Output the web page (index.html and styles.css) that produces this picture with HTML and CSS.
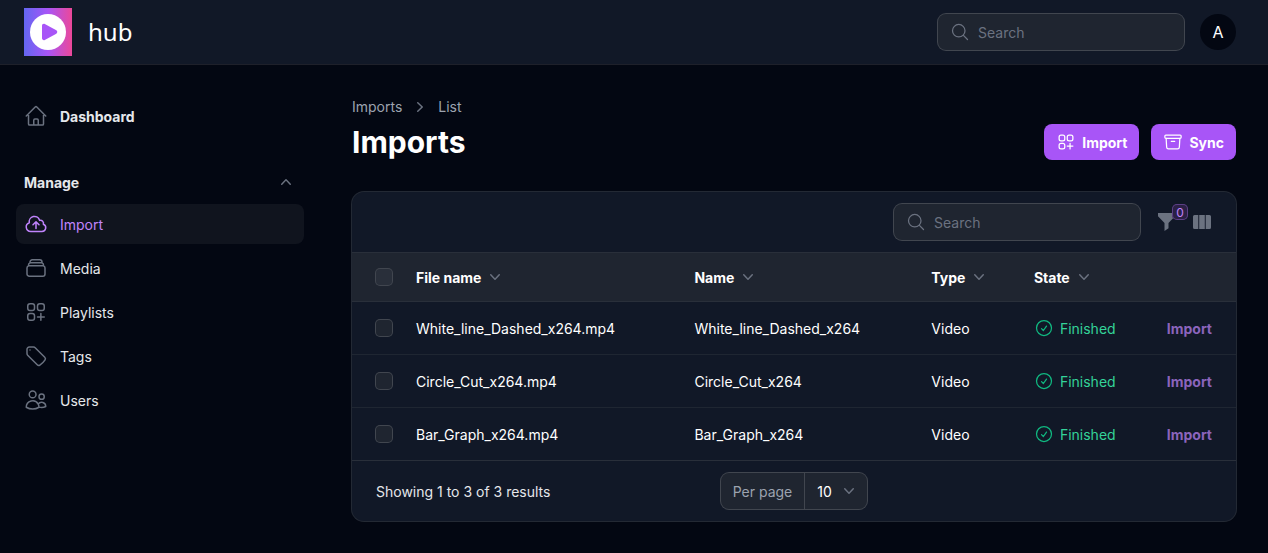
FILE: index.html
```html
<!DOCTYPE html>
<html lang="en">
<head>
<meta charset="utf-8">
<meta name="viewport" content="width=device-width, initial-scale=1">
<title>Imports - hub</title>
<link rel="stylesheet" href="styles.css">
</head>
<body>
<svg class="sprite" aria-hidden="true">
  <symbol id="home" viewBox="0 0 24 24"><path d="m2.25 12 8.954-8.955c.44-.439 1.152-.439 1.591 0L21.75 12M4.5 9.75v10.125c0 .621.504 1.125 1.125 1.125H9.75v-4.875c0-.621.504-1.125 1.125-1.125h2.25c.621 0 1.125.504 1.125 1.125V21h4.125c.621 0 1.125-.504 1.125-1.125V9.75M8.25 21h8.25"/></symbol>
  <symbol id="cloud" viewBox="0 0 24 24"><path d="M12 16.5V9.75m0 0 3 3m-3-3-3 3M6.75 19.5a4.5 4.5 0 0 1-1.41-8.775 5.25 5.25 0 0 1 10.233-2.33 3 3 0 0 1 3.758 3.848A3.752 3.752 0 0 1 18 19.5H6.75Z"/></symbol>
  <symbol id="stack" viewBox="0 0 24 24"><path d="M6 6.878V6a2.25 2.25 0 0 1 2.25-2.25h7.5A2.25 2.25 0 0 1 18 6v.878m-12 0c.235-.083.487-.128.75-.128h10.5c.263 0 .515.045.75.128m-12 0A2.25 2.25 0 0 0 4.5 9v.878m13.5-3A2.25 2.25 0 0 1 19.5 9v.878m0 0a2.246 2.246 0 0 0-.75-.128H5.25c-.263 0-.515.045-.75.128m15 0A2.25 2.25 0 0 1 21 12v6a2.25 2.25 0 0 1-2.25 2.25H5.25A2.25 2.25 0 0 1 3 18v-6c0-.98.626-1.813 1.5-2.122"/></symbol>
  <symbol id="squares" viewBox="0 0 24 24"><path d="M13.5 16.875h3.375m0 0h3.375m-3.375 0V13.5m0 3.375v3.375M6 10.5h2.25a2.25 2.25 0 0 0 2.25-2.25V6a2.25 2.25 0 0 0-2.25-2.25H6A2.25 2.25 0 0 0 3.75 6v2.25A2.25 2.25 0 0 0 6 10.5Zm0 9.75h2.25A2.25 2.25 0 0 0 10.5 18v-2.25a2.25 2.25 0 0 0-2.25-2.25H6a2.25 2.25 0 0 0-2.25 2.25V18A2.25 2.25 0 0 0 6 20.25Zm9.75-9.75H18a2.25 2.25 0 0 0 2.25-2.25V6A2.25 2.25 0 0 0 18 3.75h-2.25A2.25 2.25 0 0 0 13.5 6v2.25a2.25 2.25 0 0 0 2.25 2.25Z"/></symbol>
  <symbol id="tag" viewBox="0 0 24 24"><path d="M9.568 3H5.25A2.25 2.25 0 0 0 3 5.25v4.318c0 .597.237 1.17.659 1.591l9.581 9.581c.699.699 1.78.872 2.607.33a18.095 18.095 0 0 0 5.223-5.223c.542-.827.369-1.908-.33-2.607L11.16 3.66A2.25 2.25 0 0 0 9.568 3Z"/><path d="M6 6h.008v.008H6V6Z"/></symbol>
  <symbol id="users" viewBox="0 0 24 24"><path d="M15 19.128a9.38 9.38 0 0 0 2.625.372 9.337 9.337 0 0 0 4.121-.952 4.125 4.125 0 0 0-7.533-2.493M15 19.128v-.003c0-1.113-.285-2.16-.786-3.07M15 19.128v.106A12.318 12.318 0 0 1 8.624 21c-2.331 0-4.512-.645-6.374-1.766l-.001-.109a6.375 6.375 0 0 1 11.964-3.07M12 6.375a3.375 3.375 0 1 1-6.75 0 3.375 3.375 0 0 1 6.75 0Zm8.25 2.25a2.625 2.625 0 1 1-5.25 0 2.625 2.625 0 0 1 5.25 0Z"/></symbol>
  <symbol id="archive" viewBox="0 0 24 24"><path d="m20.25 7.5-.625 10.632a2.25 2.25 0 0 1-2.247 2.118H6.622a2.25 2.25 0 0 1-2.247-2.118L3.75 7.5M10 11.25h4M3.375 7.5h17.25c.621 0 1.125-.504 1.125-1.125v-1.5c0-.621-.504-1.125-1.125-1.125H3.375c-.621 0-1.125.504-1.125 1.125v1.5c0 .621.504 1.125 1.125 1.125Z"/></symbol>
  <symbol id="check" viewBox="0 0 24 24"><path d="M9 12.75 11.25 15 15 9.75M21 12a9 9 0 1 1-18 0 9 9 0 0 1 18 0Z"/></symbol>
  <symbol id="glass" viewBox="0 0 24 24"><path d="m21 21-5.197-5.197m0 0A7.5 7.5 0 1 0 5.196 5.196a7.5 7.5 0 0 0 10.607 10.607Z"/></symbol>
  <symbol id="down" viewBox="0 0 20 20"><path d="M5.23 7.21a.75.75 0 0 1 1.06.02L10 11.168l3.71-3.938a.75.75 0 1 1 1.08 1.04l-4.25 4.5a.75.75 0 0 1-1.08 0l-4.25-4.5a.75.75 0 0 1 .02-1.06Z"/></symbol>
  <symbol id="up" viewBox="0 0 20 20"><path d="M14.77 12.79a.75.75 0 0 1-1.06-.02L10 8.832 6.29 12.77a.75.75 0 1 1-1.08-1.04l4.25-4.5a.75.75 0 0 1 1.08 0l4.25 4.5a.75.75 0 0 1-.02 1.06Z"/></symbol>
  <symbol id="right" viewBox="0 0 20 20"><path d="M7.21 14.77a.75.75 0 0 1 .02-1.06L11.168 10 7.23 6.29a.75.75 0 1 1 1.04-1.08l4.5 4.25a.75.75 0 0 1 0 1.08l-4.5 4.25a.75.75 0 0 1-1.06-.02Z"/></symbol>
</svg>

<header class="topbar">
  <a class="brand" href="#">
    <svg class="logo" viewBox="0 0 48 48" aria-hidden="true">
      <defs><linearGradient id="brand-fill"><stop offset="0" stop-color="#6366f1"/><stop offset=".5" stop-color="#a855f7"/><stop offset="1" stop-color="#ec4899"/></linearGradient></defs>
      <path fill="url(#brand-fill)" d="M0 0h48v48H0z"/>
      <circle cx="24" cy="24" r="18" fill="#fff"/>
      <path fill="#a855f7" transform="translate(13.5 12)" d="M4.5 5.653c0-1.427 1.529-2.33 2.779-1.643l11.54 6.347c1.295.712 1.295 2.573 0 3.286L7.28 19.99c-1.25.687-2.779-.217-2.779-1.643V5.653Z"/>
    </svg>
    <span class="brand-name">hub</span>
  </a>
  <div class="topbar-end">
    <label class="search"><svg class="icon-sm line"><use href="#glass"/></svg><input type="search" placeholder="Search" aria-label="Global search"></label>
    <button class="avatar" type="button" aria-label="User menu">A</button>
  </div>
</header>

<div class="layout">
  <nav class="sidebar">
    <a class="nav-item strong" href="#"><svg class="icon line"><use href="#home"/></svg>Dashboard</a>
    <div class="nav-group">
      <button class="group-head" type="button" aria-expanded="true">Manage<svg class="icon-sm solid"><use href="#up"/></svg></button>
      <a class="nav-item active" href="#"><svg class="icon line"><use href="#cloud"/></svg>Import</a>
      <a class="nav-item" href="#"><svg class="icon line"><use href="#stack"/></svg>Media</a>
      <a class="nav-item" href="#"><svg class="icon line"><use href="#squares"/></svg>Playlists</a>
      <a class="nav-item" href="#"><svg class="icon line"><use href="#tag"/></svg>Tags</a>
      <a class="nav-item" href="#"><svg class="icon line"><use href="#users"/></svg>Users</a>
    </div>
  </nav>

  <main class="main">
    <div class="page-head">
      <div class="titles">
        <nav class="crumbs" aria-label="Breadcrumb"><a href="#">Imports</a><svg class="icon-sm solid"><use href="#right"/></svg><a href="#">List</a></nav>
        <h1>Imports</h1>
      </div>
      <div class="actions">
        <button class="btn" type="button"><svg class="icon-sm line"><use href="#squares"/></svg>Import</button>
        <button class="btn" type="button"><svg class="icon-sm line"><use href="#archive"/></svg>Sync</button>
      </div>
    </div>

    <section class="card">
      <div class="toolbar">
        <label class="search"><svg class="icon-sm line"><use href="#glass"/></svg><input type="search" placeholder="Search" aria-label="Search imports"></label>
        <div class="tools">
          <button class="tool" type="button" aria-label="Filter">
            <svg class="icon" viewBox="0 0 24 24"><path d="M4 3h17v3.200l-6.500 6.800v5.200l-4 2.800v-8L4 6.200z"/></svg>
            <span class="badge">0</span>
          </button>
          <button class="tool" type="button" aria-label="Toggle columns">
            <svg class="icon" viewBox="0 0 24 24"><path d="M4.500 5H8.300v14H4.500A1.500 1.500 0 0 1 3 17.500v-11A1.500 1.500 0 0 1 4.500 5ZM9.200 5h5.600v14H9.200zM15.700 5h3.800A1.500 1.500 0 0 1 21 6.500v11a1.500 1.500 0 0 1-1.500 1.500h-3.800z"/></svg>
          </button>
        </div>
      </div>

      <table class="table">
        <colgroup><col class="c-check"><col class="c-file"><col class="c-name"><col class="c-type"><col class="c-state"><col></colgroup>
        <thead>
          <tr>
            <th><input type="checkbox" aria-label="Select all"></th>
            <th><button class="sort" type="button">File name<svg class="icon-sm solid"><use href="#down"/></svg></button></th>
            <th><button class="sort" type="button">Name<svg class="icon-sm solid"><use href="#down"/></svg></button></th>
            <th><button class="sort" type="button">Type<svg class="icon-sm solid"><use href="#down"/></svg></button></th>
            <th><button class="sort" type="button">State<svg class="icon-sm solid"><use href="#down"/></svg></button></th>
            <th></th>
          </tr>
        </thead>
        <tbody>
          <tr>
            <td><input type="checkbox" aria-label="Select White_line_Dashed_x264"></td>
            <td>White_line_Dashed_x264.mp4</td><td>White_line_Dashed_x264</td><td>Video</td>
            <td><span class="state"><svg class="icon-sm line"><use href="#check"/></svg>Finished</span></td>
            <td class="end"><a class="row-link" href="#">Import</a></td>
          </tr>
          <tr>
            <td><input type="checkbox" aria-label="Select Circle_Cut_x264"></td>
            <td>Circle_Cut_x264.mp4</td><td>Circle_Cut_x264</td><td>Video</td>
            <td><span class="state"><svg class="icon-sm line"><use href="#check"/></svg>Finished</span></td>
            <td class="end"><a class="row-link" href="#">Import</a></td>
          </tr>
          <tr>
            <td><input type="checkbox" aria-label="Select Bar_Graph_x264"></td>
            <td>Bar_Graph_x264.mp4</td><td>Bar_Graph_x264</td><td>Video</td>
            <td><span class="state"><svg class="icon-sm line"><use href="#check"/></svg>Finished</span></td>
            <td class="end"><a class="row-link" href="#">Import</a></td>
          </tr>
        </tbody>
      </table>

      <div class="card-foot">
        <span>Showing 1 to 3 of 3 results</span>
        <div class="per-page">
          <label for="per-page">Per page</label>
          <span class="select">
            <select id="per-page"><option>10</option><option>25</option><option>50</option></select>
            <svg class="icon-sm solid"><use href="#down"/></svg>
          </span>
        </div>
      </div>
    </section>
  </main>
</div>
</body>
</html>
```
FILE: styles.css
```css
*, *::before, *::after { box-sizing: border-box; }
body {
  margin: 0;
  min-height: 100vh;
  background: #030712;
  color: #fff;
  font: 14px/21px Inter, sans-serif;
}
a { color: inherit; text-decoration: none; }
button, input, select { font: inherit; color: inherit; margin: 0; padding: 0; border: 0; background: none; }
button { cursor: pointer; }
.sprite { position: absolute; width: 0; height: 0; }
.icon { width: 24px; height: 24px; flex: none; }
.icon-sm { width: 20px; height: 20px; flex: none; }
.line { fill: none; stroke: currentColor; stroke-width: 1.5; stroke-linecap: round; stroke-linejoin: round; }
.solid { fill: #6b7280; }

.topbar {
  display: flex;
  align-items: center;
  justify-content: space-between;
  height: 64px;
  padding: 0 32px 0 24px;
  background: #111827;
  box-shadow: 0 0 0 1px #1e202a;
}
.brand { display: flex; align-items: center; gap: 16px; }
.logo { width: 48px; height: 48px; }
.brand-name { font: 24px/32px "Noto Sans", sans-serif; }
.topbar-end { display: flex; align-items: center; gap: 16px; }
.avatar { width: 36px; height: 36px; border-radius: 50%; background: #030712; font-size: 16px; }

.search {
  display: flex;
  align-items: center;
  gap: 8px;
  width: 246px;
  height: 36px;
  padding: 0 12px;
  border-radius: 8px;
  background: #1f2530;
  box-shadow: 0 0 0 1px #41464f;
  color: #6b7280;
}
.search input { flex: 1; min-width: 0; height: 21px; outline: 0; color: #fff; appearance: none; }
.search input::placeholder { color: #6b7280; opacity: 1; }

.layout { display: flex; }
.sidebar {
  display: flex;
  flex-direction: column;
  gap: 28px;
  flex: none;
  width: 320px;
  padding: 32px 16px;
}
.nav-group { display: flex; flex-direction: column; gap: 4px; }
.nav-item {
  display: flex;
  align-items: center;
  gap: 12px;
  height: 40px;
  padding: 0 8px;
  border-radius: 8px;
  color: #e5e7eb;
}
.nav-item .icon { color: #6b7280; }
.strong { font-weight: 700; }
.active { background: #10141e; color: #c084fc; }
.active .icon { color: #c084fc; }
.group-head {
  display: flex;
  align-items: center;
  justify-content: space-between;
  height: 36px;
  padding: 0 8px;
  color: #e5e7eb;
  font-weight: 700;
}

.main { flex: 1; min-width: 0; padding: 32px; }
.page-head { display: flex; align-items: flex-end; justify-content: space-between; margin-bottom: 32px; }
.crumbs { display: flex; align-items: center; gap: 8px; margin-bottom: 7px; color: #9ca3af; }
h1 { margin: 0; font-size: 30px; line-height: 36px; font-weight: 700; }
.actions { display: flex; gap: 12px; }
.btn {
  display: flex;
  align-items: center;
  gap: 6px;
  height: 36px;
  padding: 0 12px;
  border-radius: 8px;
  background: #a855f7;
  font-weight: 700;
}

.card { border-radius: 12px; background: #111827; box-shadow: 0 0 0 1px #232934; }
.toolbar { display: flex; justify-content: flex-end; align-items: center; gap: 14px; padding: 12px 24px; }
.tools { display: flex; gap: 12px; margin-right: -2px; }
.tool { position: relative; display: flex; }
.tool .icon { fill: #6b7280; }
.badge {
  position: absolute;
  top: -6px;
  right: -10px;
  width: 16px;
  height: 16px;
  border-radius: 5px;
  background: #2b2045;
  box-shadow: inset 0 0 0 1px #5c3f86;
  color: #c084fc;
  font-size: 12px;
  line-height: 17px;
  text-align: center;
}

.table { width: 100%; table-layout: fixed; border-collapse: separate; border-spacing: 0; }
.c-check { width: 52px; }
.c-file { width: 31.5%; }
.c-name { width: 26.8%; }
.c-type { width: 11.6%; }
.c-state { width: 13.3%; }
.table th, .table td { padding: 0 12px; text-align: left; white-space: nowrap; vertical-align: middle; border-top: 1px solid #1f2632; }
.table th { height: 49px; background: #1f2530; border-top-color: #292f3a; font-weight: 700; }
.table td { height: 53px; }
.table tbody tr:first-child td { border-top-color: #292f3a; }
.table th:first-child, .table td:first-child { padding-left: 24px; padding-right: 0; }
.table .end { padding-right: 24px; text-align: right; }
.table input {
  display: block;
  width: 16px;
  height: 16px;
  appearance: none;
  border-radius: 4px;
  background: #1f2530;
  box-shadow: 0 0 0 1px #41464f;
}
.table th input { background: #292f3a; }
.sort { display: flex; align-items: center; gap: 4px; font-weight: 700; }
.state { display: flex; align-items: center; gap: 6px; color: #34d399; }
.state .icon-sm { color: #10b981; }
.row-link { color: #8b64bc; font-weight: 700; }

.card-foot {
  display: grid;
  grid-template-columns: 1fr auto 1fr;
  align-items: center;
  padding: 12px 24px;
  border-top: 1px solid #292f3a;
  color: #e5e7eb;
}
.per-page {
  display: flex;
  align-items: center;
  height: 36px;
  border-radius: 8px;
  background: #1f2530;
  box-shadow: 0 0 0 1px #41464f;
}
.per-page label { padding: 0 12px; line-height: 37px; border-right: 1px solid #41464f; color: #9ca3af; }
.select { display: grid; align-items: center; }
.select select { grid-area: 1 / 1; height: 37px; padding: 0 32px 0 12px; appearance: none; outline: 0; color: #fff; }
.select option { color: #111827; }
.select svg { grid-area: 1 / 1; justify-self: end; margin-right: 8px; pointer-events: none; }

@media (max-width: 1000px) {
  .sidebar { width: 200px; }
  .card { overflow-x: auto; }
  .table { min-width: 880px; }
}
```
